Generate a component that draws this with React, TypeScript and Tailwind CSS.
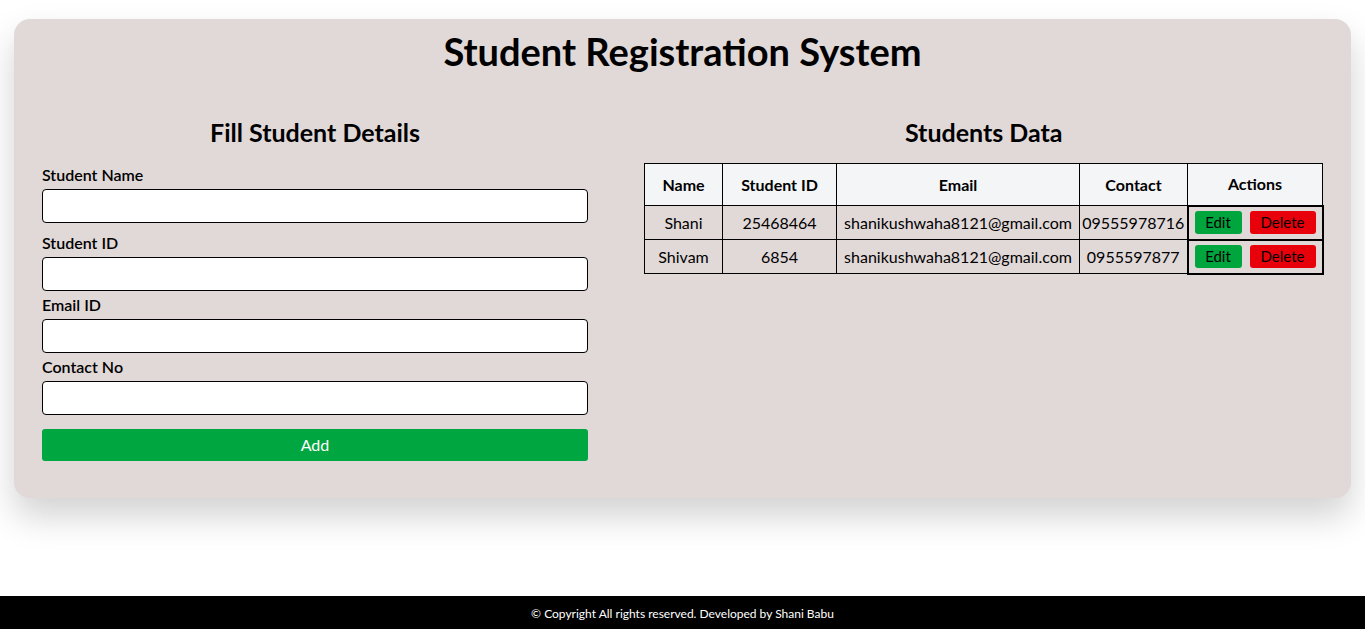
import React from 'react';

const students = [
  { name: 'Shani', id: '25468464', email: 'shanikushwaha8121@gmail.com', contact: '09555978716' },
  { name: 'Shivam', id: '6854', email: 'shanikushwaha8121@gmail.com', contact: '0955597877' },
];

const fields = ['Student Name', 'Student ID', 'Email ID', 'Contact No'];

export default function App() {
  return (
    <div className="min-h-screen flex flex-col bg-white text-black font-['Lato',sans-serif]">
      <main className="flex-1 px-[14px] pt-[19px]">
        <div className="bg-[#e1d8d8] rounded-[16px] shadow-[0_18px_35px_rgba(0,0,0,0.18)] px-[28px] pt-[12px] pb-[37px]">
          <h1 className="text-center text-[38px] leading-[40px] font-bold">Student Registration System</h1>

          <div className="flex gap-[56px] mt-[45px]">
            {/* Form */}
            <div className="w-[546px] shrink-0">
              <h2 className="text-center text-[25px] leading-[32px] font-bold mb-[17px]">Fill Student Details</h2>
              <form className="flex flex-col">
                {fields.map((f, i) => (
                  <div key={f} className={i === 0 ? 'mb-[10px]' : 'mb-[4px]'}>
                    <label className="block text-[16px] leading-[20px] font-semibold mb-[4px]">{f}</label>
                    <input className="block w-full h-[34px] bg-white border border-black rounded-[4px] px-2" />
                  </div>
                ))}
                <button
                  type="button"
                  className="mt-[10px] h-[32px] w-full bg-[#00a640] text-white text-[16px] rounded-[3px]"
                >
                  Add
                </button>
              </form>
            </div>

            {/* Table */}
            <div className="flex-1">
              <h2 className="text-center text-[25px] leading-[32px] font-bold mb-[15px]">Students Data</h2>
              <table className="w-[678px] table-fixed border-collapse text-[16px] text-center">
                <colgroup>
                  <col className="w-[78px]" />
                  <col className="w-[114px]" />
                  <col className="w-[243px]" />
                  <col className="w-[108px]" />
                  <col className="w-[135px]" />
                </colgroup>
                <thead>
                  <tr className="bg-[#f4f5f7] h-[42px]">
                    <th className="border border-black">Name</th>
                    <th className="border border-black">Student ID</th>
                    <th className="border border-black">Email</th>
                    <th className="border border-black">Contact</th>
                    <th className="border border-black">Actions</th>
                  </tr>
                </thead>
                <tbody>
                  {students.map((s) => (
                    <tr key={s.id} className="h-[34px]">
                      <td className="border border-black">{s.name}</td>
                      <td className="border border-black">{s.id}</td>
                      <td className="border border-black whitespace-nowrap">{s.email}</td>
                      <td className="border border-black whitespace-nowrap">{s.contact}</td>
                      <td className="border-2 border-black pl-[6px]">
                        <div className="flex gap-[8px]">
                          <button className="bg-[#00a53d] rounded-[3px] w-[47px] h-[23px] text-[15px]">Edit</button>
                          <button className="bg-[#e8000b] rounded-[3px] w-[66px] h-[23px] text-[15px]">Delete</button>
                        </div>
                      </td>
                    </tr>
                  ))}
                </tbody>
              </table>
            </div>
          </div>
        </div>
      </main>
      <footer className="bg-black text-white text-center text-[12px] h-[33px] pt-[3px] flex items-center justify-center">
        © Copyright All rights reserved. Developed by Shani Babu
      </footer>
    </div>
  );
}
